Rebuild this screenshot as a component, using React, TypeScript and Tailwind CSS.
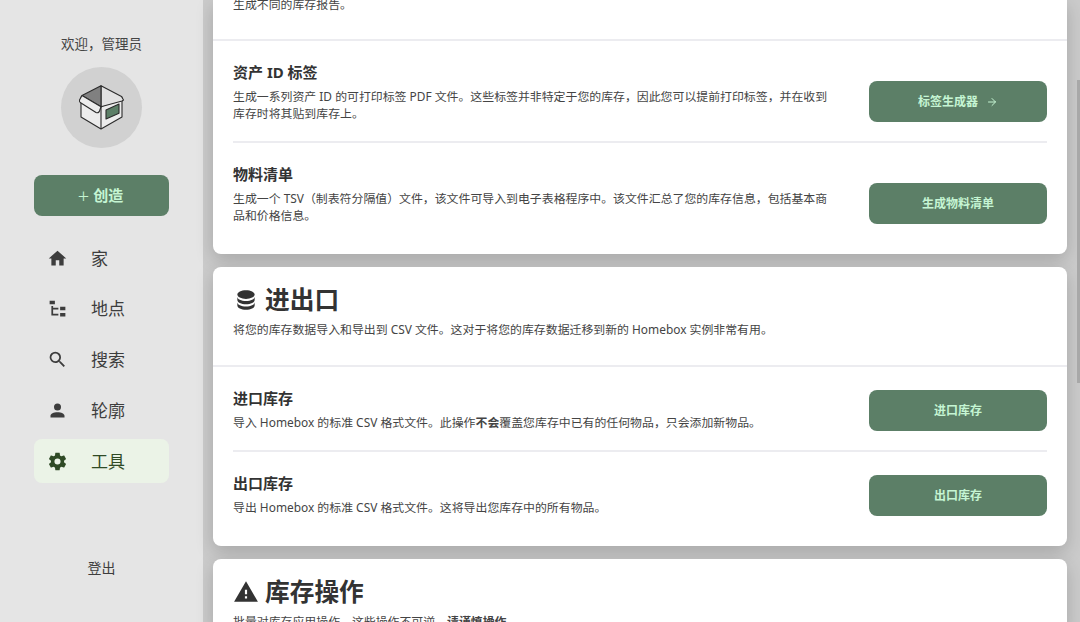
import type { ReactNode } from "react";
import { ArrowRight } from "lucide-react";

const paths = {
  home: "M10,20V14H14V20H19V12H22L12,3L2,12H5V20H10Z",
  tree: "M3,3H9V7H3V3M15,10H21V14H15V10M15,17H21V21H15V17M13,13H7V18H13V20H7L5,20V9H7V11H13V13Z",
  search:
    "M9.5,3A6.5,6.5 0 0,1 16,9.5C16,11.11 15.41,12.59 14.44,13.73L14.71,14H15.5L20.5,19L19,20.5L14,15.5V14.71L13.73,14.44C12.59,15.41 11.11,16 9.5,16A6.5,6.5 0 0,1 3,9.5A6.5,6.5 0 0,1 9.5,3M9.5,5C7,5 5,7 5,9.5C5,12 7,14 9.5,14C12,14 14,12 14,9.5C14,7 12,5 9.5,5Z",
  account:
    "M12,4A4,4 0 0,1 16,8A4,4 0 0,1 12,12A4,4 0 0,1 8,8A4,4 0 0,1 12,4M12,14C16.42,14 20,15.79 20,18V20H4V18C4,15.79 7.58,14 12,14Z",
  cog: "M12,15.5A3.5,3.5 0 0,1 8.5,12A3.5,3.5 0 0,1 12,8.5A3.5,3.5 0 0,1 15.5,12A3.5,3.5 0 0,1 12,15.5M19.43,12.97C19.47,12.65 19.5,12.33 19.5,12C19.5,11.67 19.47,11.34 19.43,11L21.54,9.37C21.73,9.22 21.78,8.95 21.66,8.73L19.66,5.27C19.54,5.05 19.27,4.96 19.05,5.05L16.56,6.05C16.04,5.66 15.5,5.32 14.87,5.07L14.5,2.42C14.46,2.18 14.25,2 14,2H10C9.75,2 9.54,2.18 9.5,2.42L9.13,5.07C8.5,5.32 7.96,5.66 7.44,6.05L4.95,5.05C4.73,4.96 4.46,5.05 4.34,5.27L2.34,8.73C2.21,8.95 2.27,9.22 2.46,9.37L4.57,11C4.53,11.34 4.5,11.67 4.5,12C4.5,12.33 4.53,12.65 4.57,12.97L2.46,14.63C2.27,14.78 2.21,15.05 2.34,15.27L4.34,18.73C4.46,18.95 4.73,19.03 4.95,18.95L7.44,17.94C7.96,18.34 8.5,18.68 9.13,18.93L9.5,21.58C9.54,21.82 9.75,22 10,22H14C14.25,22 14.46,21.82 14.5,21.58L14.87,18.93C15.5,18.67 16.04,18.34 16.56,17.94L19.05,18.95C19.27,19.03 19.54,18.95 19.66,18.73L21.66,15.27C21.78,15.05 21.73,14.78 21.54,14.63L19.43,12.97Z",
  database:
    "M12,3C7.58,3 4,4.79 4,7C4,9.21 7.58,11 12,11C16.42,11 20,9.21 20,7C20,4.79 16.42,3 12,3M4,9V12C4,14.21 7.58,16 12,16C16.42,16 20,14.21 20,12V9C20,11.21 16.42,13 12,13C7.58,13 4,11.21 4,9M4,14V17C4,19.21 7.58,21 12,21C16.42,21 20,19.21 20,17V14C20,16.21 16.42,18 12,18C7.58,18 4,16.21 4,14Z",
  alert: "M13 14H11V10H13M13 18H11V16H13M1 21H23L12 2L1 21Z",
};

function Mdi({ d, className }: { d: string; className?: string }) {
  return (
    <svg viewBox="0 0 24 24" fill="currentColor" className={className}>
      <path d={d} />
    </svg>
  );
}

function BoxLogo() {
  return (
    <svg viewBox="0 0 81 81" className="w-[81px] h-[81px]" fill="none" stroke="#2b2b2b" strokeWidth="1.1" strokeLinejoin="round">
      <path d="M20 30 L20 50 L40 62 L61 50 L61 30 L40 39.7 Z" fill="#ececec" />
      <path d="M40 18.7 L60.5 29.5 L62.5 33 L61 34 L40 39.7 Z" fill="#e2e2e2" />
      <path d="M40 18.7 L21 28.5 L40 39.7 Z" fill="#808080" />
      <path d="M21 28.5 L18.5 33 Q18 35 20 36 L35 45.5 Q37.5 46.5 38.5 44 L40 39.7 Z" fill="#ececec" />
      <path d="M40 39.7 L40 62" />
      <path d="M45 43 L58 37 L58 46.3 L45 52 Z" fill="#5c7f67" />
    </svg>
  );
}

function NavItem({ icon, label, active }: { icon: string; label: string; active?: boolean }) {
  return (
    <div
      className={`flex items-center h-[44px] w-[135px] rounded-lg pl-[13px] ${
        active ? "bg-[#ebf3e7] text-[#2f4a26]" : "text-[#3d3d3d]"
      }`}
    >
      <Mdi d={icon} className="w-[21px] h-[21px]" />
      <span className="ml-[23px] text-[17px] leading-none">{label}</span>
    </div>
  );
}

function ActionButton({ children }: { children: ReactNode }) {
  return (
    <button className="flex shrink-0 items-center justify-center gap-2 w-[178px] h-[41px] rounded-lg bg-[#5c7f67] text-[#c5f5d3] text-[12px] font-semibold">
      {children}
    </button>
  );
}

function Row({
  title,
  action,
  children,
  className,
}: {
  title: string;
  action: ReactNode;
  children: ReactNode;
  className: string;
}) {
  return (
    <div className={`flex items-end justify-between pt-5 ${className}`}>
      <div className="w-[600px]">
        <h4 className="text-[15px] leading-[22px] font-bold text-[#333333]">{title}</h4>
        <p className="mt-[5px] text-[11.9px] leading-[17px] text-[#444444]">{children}</p>
      </div>
      {action}
    </div>
  );
}

function CardHeading({ icon, title }: { icon: string; title: string }) {
  return (
    <h3 className="flex items-center gap-[6px] text-[24.7px] leading-[32px] font-bold text-[#333333]">
      <Mdi d={icon} className="w-[26px] h-[26px]" />
      {title}
    </h3>
  );
}

export default function App() {
  return (
    <div
      className="flex h-screen overflow-hidden bg-[#cbcbcb]"
      style={{ fontFamily: '"Noto Sans", "Noto Sans CJK SC", sans-serif' }}
    >
      <aside className="flex flex-col items-center w-[203px] shrink-0 bg-[#e5e5e5] pt-[34px]">
        <p className="text-[13.5px] leading-[20px] text-[#444444]">欢迎，管理员</p>
        <div className="mt-[13px] rounded-full bg-[#d1d1d1]">
          <BoxLogo />
        </div>
        <button className="mt-[27px] flex items-center justify-center gap-[4px] pr-[2px] w-[135px] h-[41px] rounded-lg bg-[#5c7f67] text-[#c5f5d3] text-[15px] font-bold">
          <span className="font-light text-[20px] leading-none">+</span>
          创造
        </button>
        <nav className="mt-[20px] flex flex-col gap-[6.75px]">
          <NavItem icon={paths.home} label="家" />
          <NavItem icon={paths.tree} label="地点" />
          <NavItem icon={paths.search} label="搜索" />
          <NavItem icon={paths.account} label="轮廓" />
          <NavItem icon={paths.cog} label="工具" active />
        </nav>
        <p className="mt-[75px] text-[14px] leading-[20px] text-[#3d3d3d]">登出</p>
      </aside>

      <main className="flex-1 min-w-0 flex">
        <div className="w-[864px] shrink-0 pl-[10px] flex flex-col gap-[13px]">
          <section className="h-[254px] shrink-0 rounded-b-lg bg-white shadow-[0_6px_18px_rgba(0,0,0,0.18)]">
            <div className="h-[41px] px-[20px] border-b-2 border-[#ececf0]">
              <p className="text-[11.9px] leading-[9px] text-[#444444]">生成不同的库存报告。</p>
            </div>
            <Row
              title="资产 ID 标签"
              className="mx-[20px] pb-[19px] border-b-2 border-[#ececf0]"
              action={
                <ActionButton>
                  标签生成器
                  <ArrowRight className="w-3 h-3" />
                </ActionButton>
              }
            >
              生成一系列资产 ID 的可打印标签 PDF 文件。这些标签并非特定于您的库存，因此您可以提前打印标签，并在收到库存时将其贴到库存上。
            </Row>
            <Row title="物料清单" className="mx-[20px]" action={<ActionButton>生成物料清单</ActionButton>}>
              生成一个 TSV（制表符分隔值）文件，该文件可导入到电子表格程序中。该文件汇总了您的库存信息，包括基本商品和价格信息。
            </Row>
          </section>

          <section className="h-[279px] shrink-0 rounded-lg bg-white shadow-[0_6px_18px_rgba(0,0,0,0.18)]">
            <div className="h-[100px] px-[20px] pt-[17px] border-b-2 border-[#ececf0]">
              <CardHeading icon={paths.database} title="进出口" />
              <p className="mt-[5px] text-[11.9px] leading-[17px] text-[#444444]">
                将您的库存数据导入和导出到 CSV 文件。这对于将您的库存数据迁移到新的 Homebox 实例非常有用。
              </p>
            </div>
            <Row title="进口库存" className="mx-[20px] pb-[19px] border-b-2 border-[#ececf0]" action={<ActionButton>进口库存</ActionButton>}>
              导入 Homebox 的标准 CSV 格式文件。此操作<b>不会</b>覆盖您库存中已有的任何物品，只会添加新物品。
            </Row>
            <Row title="出口库存" className="mx-[20px]" action={<ActionButton>出口库存</ActionButton>}>
              导出 Homebox 的标准 CSV 格式文件。这将导出您库存中的所有物品。
            </Row>
          </section>

          <section className="flex-1 rounded-t-lg bg-white px-[20px] pt-[17px] shadow-[0_6px_18px_rgba(0,0,0,0.18)]">
            <CardHeading icon={paths.alert} title="库存操作" />
            <p className="mt-[5px] text-[11.9px] leading-[17px] text-[#444444]">
              批量对库存应用操作。这些操作不可逆。<b>请谨慎操作。</b>
            </p>
          </section>
        </div>
        <div className="flex-1 flex justify-end">
          <div className="w-[3px] h-[303px] mt-[80px] bg-[#a8a8a8]" />
        </div>
      </main>
    </div>
  );
}
